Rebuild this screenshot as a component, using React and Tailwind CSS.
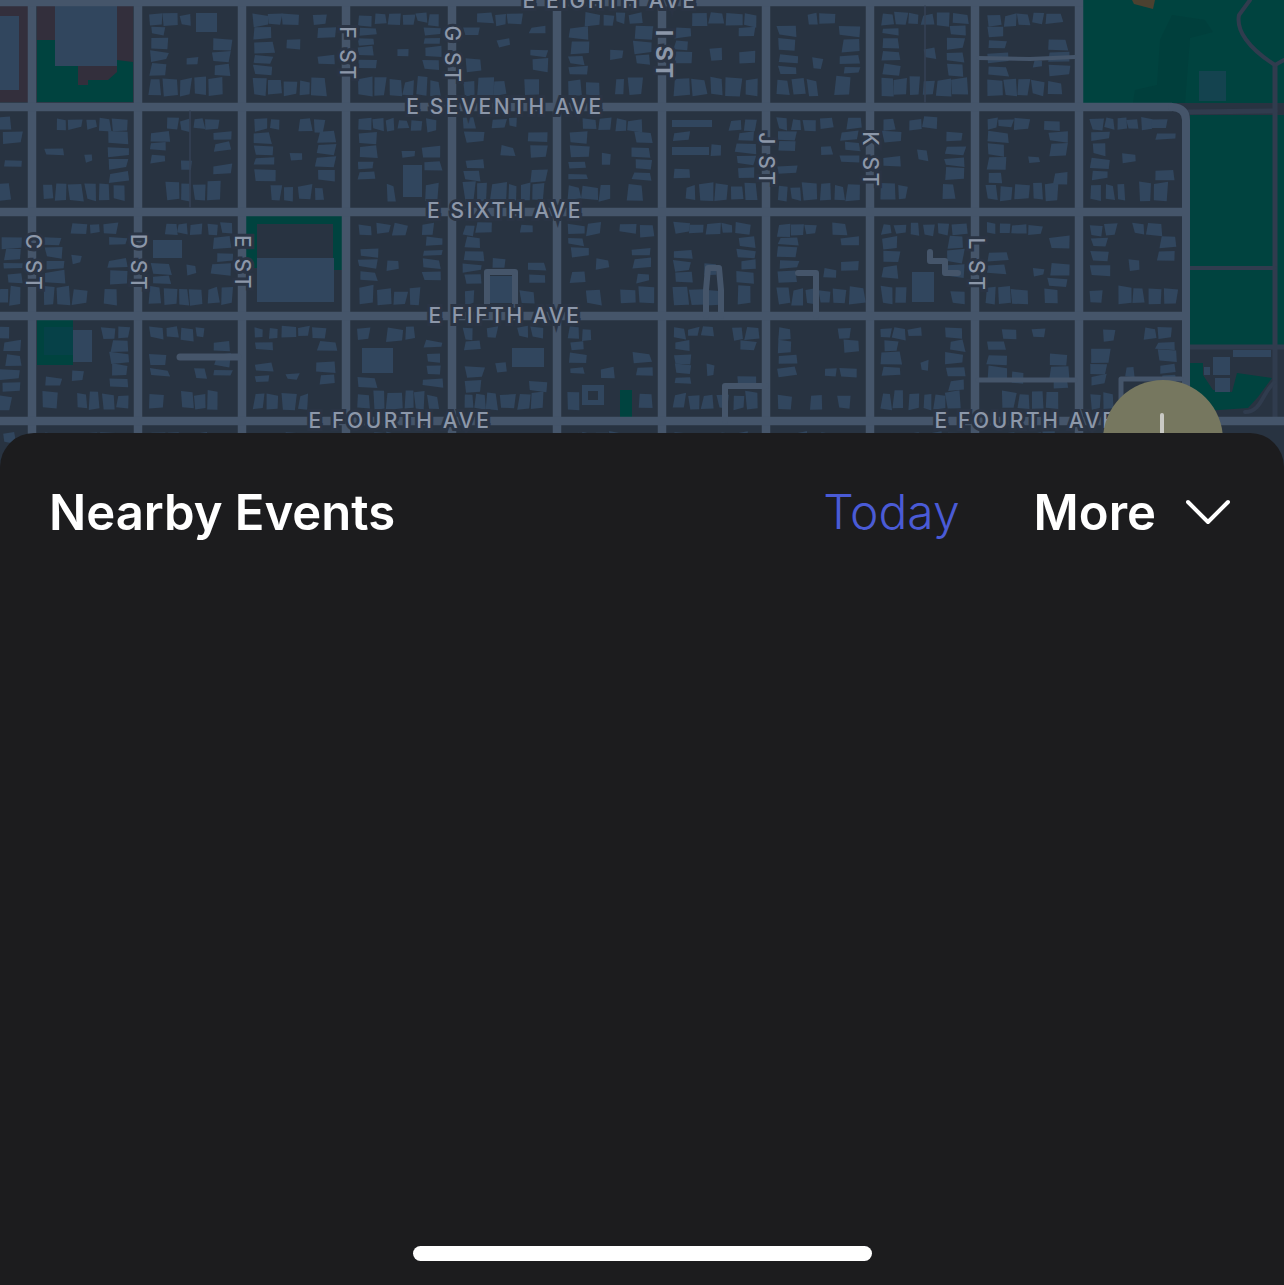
const roadX = [32, 138, 242, 346, 452, 557, 662, 766, 870, 975, 1079];
const roadY = [2, 107, 212, 316, 421];

// big footprints that are placed by hand, the rest gets filled in around them
const bigBuildings = [
  [196, 13, 21, 19],
  [403, 165, 19, 32],
  [153, 240, 29, 18],
  [512, 348, 32, 19],
  [582, 385, 22, 20],
  [362, 348, 31, 25],
  [73, 330, 19, 32],
  [257, 258, 77, 44],
  [55, 0, 62, 66],
  [0, 16, 19, 74],
  [489, 276, 26, 27],
  [912, 272, 22, 30],
  [672, 120, 40, 7],
  [672, 147, 37, 8],
];

// parks and other lots where no houses go
const noHouses = [
  [246, 216, 96, 96],
  [37, 320, 56, 46],
  [618, 388, 16, 30],
  [37, 0, 96, 102],
];

const keepOut = [...bigBuildings, ...noHouses];

function makeRand(seed) {
  let a = seed;
  return () => {
    a = (a + 0x6d2b79f5) | 0;
    let t = Math.imul(a ^ (a >>> 15), 1 | a);
    t = (t + Math.imul(t ^ (t >>> 7), 61 | t)) ^ t;
    return ((t ^ (t >>> 14)) >>> 0) / 4294967296;
  };
}

function isBlocked(x, y, w, h) {
  return keepOut.some(
    ([bx, by, bw, bh]) => x < bx + bw + 2 && x + w > bx - 2 && y < by + bh + 2 && y + h > by - 2
  );
}

function lot(rand, x, y, w, h) {
  const j = () => (rand() - 0.5) * 3.4;
  return `${x + j()},${y + j()} ${x + w + j()},${y + j()} ${x + w + j()},${y + h + j()} ${x + j()},${y + h + j()}`;
}

// ring of houses along the inside edge of a block
function blockLots(x0, y0, x1, y1, rand) {
  const out = [];
  const pad = 7;
  for (let x = x0 + pad; x < x1 - pad - 8; ) {
    const w = 9 + rand() * 6;
    const topH = 9 + rand() * 3;
    const botH = 13 + rand() * 5;
    if (rand() > 0.3 && !isBlocked(x, y0 + pad, w, topH)) out.push(lot(rand, x, y0 + pad + rand() * 2, w, topH));
    if (rand() > 0.1 && !isBlocked(x, y1 - pad - botH, w, botH)) out.push(lot(rand, x, y1 - pad - botH, w, botH));
    x += w + 1.5 + rand() * 3;
  }
  for (let y = y0 + pad + 14; y < y1 - pad - 26; ) {
    const h = 7 + rand() * 5;
    const w = 14 + rand() * 5;
    if (rand() > 0.16 && !isBlocked(x0 + pad, y, w, h)) out.push(lot(rand, x0 + pad + rand() * 2, y, w, h));
    if (rand() > 0.16 && !isBlocked(x1 - pad - w, y, w, h)) out.push(lot(rand, x1 - pad - w + rand() * 2, y, w, h));
    y += h + 1.5 + rand() * 3;
  }
  const x = x0 + 32 + rand() * 24;
  const y = y0 + 32 + rand() * 24;
  if (!isBlocked(x, y, 12, 10)) out.push(lot(rand, x, y, 8 + rand() * 5, 7 + rand() * 4));
  return out;
}

const lots = [];
const edgesX = [-72, ...roadX, 1186];
const edgesY = [...roadY, 527];
const rand = makeRand(41);
for (let i = 0; i < edgesX.length - 1; i++) {
  for (let j = 0; j < edgesY.length - 1; j++) {
    const x0 = edgesX[i] + 5;
    const x1 = edgesX[i + 1] - 5;
    const y0 = edgesY[j] + 4;
    const y1 = edgesY[j + 1] - 5;
    // first lot in the top row is the brown one, last is the park
    if (j === 0 && (i === 0 || i === edgesX.length - 2)) continue;
    lots.push(...blockLots(x0, y0, x1, y1, rand));
  }
}

const labels = [
  { t: "E EIGHTH AVE", x: 610, y: 8 },
  { t: "E SEVENTH AVE", x: 505, y: 114 },
  { t: "E SIXTH AVE", x: 505, y: 218 },
  { t: "E FIFTH AVE", x: 505, y: 323 },
  { t: "E FOURTH AVE", x: 400, y: 428 },
  { t: "E FOURTH AVE", x: 1026, y: 428 },
  { t: "F ST", x: 348, y: 54, v: true },
  { t: "G ST", x: 453, y: 55, v: true },
  { t: "I ST", x: 664, y: 55, v: true, bold: true },
  { t: "J ST", x: 767, y: 160, v: true },
  { t: "K ST", x: 871, y: 160, v: true },
  { t: "C ST", x: 34, y: 263, v: true },
  { t: "D ST", x: 139, y: 263, v: true },
  { t: "E ST", x: 243, y: 263, v: true },
  { t: "L ST", x: 977, y: 265, v: true },
];

function CityMap() {
  return (
    <svg viewBox="0 0 1284 470" className="block w-full h-[470px]">
      <rect width="1284" height="470" fill="#283341" />

      {/* park top right and its paths */}
      <rect x="1083" y="0" width="201" height="103" fill="#00433f" />
      <path d="M1133 103 L1135 90 L1157 85 L1160 40 L1172 15 L1205 20 L1213 32 L1190 38 L1185 103 Z" fill="#003f3c" />
      <path d="M1132 0 H1155 L1153 9 L1134 4 Z" fill="#4b4130" />
      <rect x="1199" y="71" width="27" height="30" fill="#14434f" />
      <rect x="1190" y="115" width="94" height="230" fill="#00433f" />
      <path d="M1190 363 H1203 V375 L1213 390 L1232 392 L1237 373 L1272 378 L1258 397 L1248 408 L1190 412 Z" fill="#00433f" />
      <g fill="#31465e">
        <rect x="1213" y="357" width="17" height="18" />
        <rect x="1215" y="378" width="15" height="14" />
        <rect x="1233" y="350" width="38" height="7" />
        <rect x="1204" y="367" width="6" height="8" />
      </g>
      <g fill="none" stroke="#303c4e" strokeLinecap="round">
        <path d="M1188 112 L1275 111" strokeWidth="5" />
        <path d="M1275 66 V418" strokeWidth="5" />
        <path d="M1190 268 H1275" strokeWidth="4" />
        <path d="M1190 347 H1284" strokeWidth="5" />
        <path d="M1250 0 L1239 15 C1236 30 1248 48 1275 65 L1284 60" strokeWidth="4" />
        <path d="M1245 412 C1262 412 1262 392 1275 382" strokeWidth="4" />
      </g>

      {/* special lots */}
      <rect x="0" y="6" width="28" height="96" fill="#332f3c" />
      <rect x="37" y="0" width="96" height="102" fill="#332f3c" />
      <path d="M37 40 H55 V66 H78 V85 H88 V80 H108 L117 72 V60 L133 62 V102 H37 Z" fill="#00433f" />
      <path d="M246 216 H342 V270 H333 V224 H257 V268 H246 Z" fill="#00433f" />
      <rect x="620" y="390" width="12" height="27" fill="#00433f" />
      <rect x="37" y="320" width="36" height="45" fill="#00433f" />
      <rect x="44" y="327" width="29" height="28" fill="#12405a" fillOpacity="0.35" />

      <g fill="#31465e">
        {lots.map((p, i) => (
          <polygon key={i} points={p} />
        ))}
        {bigBuildings.map(([x, y, w, h]) => (
          <rect key={`${x}-${y}`} x={x} y={y} width={w} height={h} />
        ))}
      </g>
      <rect x="588" y="391" width="10" height="9" fill="#283341" />

      {/* street grid */}
      <g stroke="#45556a" fill="none" strokeLinejoin="round" strokeLinecap="round">
        {roadX.map((x) => (
          <line key={x} x1={x} y1="0" x2={x} y2="470" strokeWidth="8.5" strokeLinecap="butt" />
        ))}
        <line x1="0" y1="2" x2="1083" y2="2" strokeWidth="8.5" strokeLinecap="butt" />
        <line x1="0" y1="107" x2="1172" y2="107" strokeWidth="8.5" strokeLinecap="butt" />
        <line x1="0" y1="212" x2="1186" y2="212" strokeWidth="8.5" strokeLinecap="butt" />
        <line x1="0" y1="316" x2="1186" y2="316" strokeWidth="8.5" strokeLinecap="butt" />
        <line x1="0" y1="421" x2="1284" y2="421" strokeWidth="8.5" strokeLinecap="butt" />
        <path d="M1172 107 Q1186 108 1186 120 V421" strokeWidth="8" />
        <path d="M180 357 H238" strokeWidth="7" />
        <path d="M487 305 V272 H515 V305" strokeWidth="6" />
        <path d="M706 316 V290 L708 268 H719 L721 290 V316" strokeWidth="6" />
        <path d="M798 273 H816 V316" strokeWidth="6" />
        <path d="M725 421 V386 H766" strokeWidth="6" />
        <path d="M978 58 L1030 59 L1075 57" strokeWidth="4" />
        <path d="M978 380 H1075" strokeWidth="5" />
        <path d="M930 252 V261 H945 V273 H958" strokeWidth="6" />
        <path d="M1121 400 V379 H1181" strokeWidth="5" />
        <path d="M190 111 V207" strokeWidth="1.5" stroke="#354256" />
        <path d="M925 6 V102" strokeWidth="1.5" stroke="#354256" />
      </g>

      {/* street names */}
      {labels.map((l) => (
        <text
          key={`${l.t}-${l.x}`}
          x={l.x}
          y={l.y}
          textAnchor="middle"
          transform={l.v ? `rotate(90 ${l.x} ${l.y}) translate(0 8)` : undefined}
          fill="#8c97a9"
          stroke="#2a3444"
          strokeWidth="6"
          className={`[paint-order:stroke] font-['Inter',sans-serif] ${l.bold ? "font-bold tracking-[2px] text-[23px]" : "font-medium tracking-[2.6px] text-[21px]"}`}
        >
          {l.t}
        </text>
      ))}
    </svg>
  );
}

export default function App() {
  return (
    <div className="relative flex flex-col w-[1284px] h-[1285px] overflow-hidden bg-[#1c1c1e] font-['Inter',sans-serif]">
      <div className="relative h-[470px] shrink-0">
        <CityMap />
        {/* location pin, mostly hidden by the sheet */}
        <div className="absolute left-[1103px] top-[380px] w-[120px] h-[120px] rounded-full bg-[#76775f]">
          <div className="absolute left-[57px] top-[33px] w-[4px] h-[40px] rounded-full bg-[#c9c9c4]" />
        </div>
      </div>

      <div className="relative flex flex-col flex-1 -mt-[37px] rounded-t-[34px] bg-[#1c1c1e]">
        <div className="flex items-center h-[158px] pl-[49px] pr-[54px]">
          <h2 className="flex-1 text-[49px] font-semibold text-white leading-none">Nearby Events</h2>
          <span className="text-[48px] font-light text-[#4a5bd6] leading-none">Today</span>
          <span className="ml-[74px] text-[49px] font-semibold text-white leading-none">More</span>
          <svg viewBox="0 0 44 26" className="ml-[30px] w-[44px] h-[26px] text-white" fill="none" stroke="currentColor" strokeWidth="4" strokeLinecap="round" strokeLinejoin="round">
            <path d="M2 3 L22 23 L42 3" />
          </svg>
        </div>
        <div className="flex-1" />
        <div className="flex justify-center pb-[24px]">
          <div className="w-[459px] h-[15px] rounded-full bg-white" />
        </div>
      </div>
    </div>
  );
}
